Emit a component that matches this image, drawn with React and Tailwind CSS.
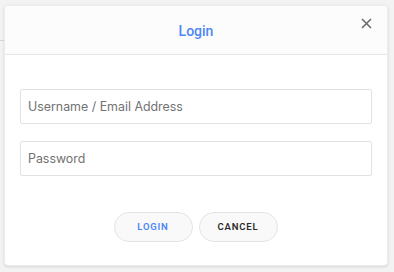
export default function App() {
  return (
    <div className="relative w-[394px] h-[272px] bg-[#f3f3f3] overflow-hidden" style={{ fontFamily: "Inter, 'Noto Sans', sans-serif" }}>
      <div className="absolute left-0 top-[40px] w-[6px] h-px bg-[#d9d9d9]" />
      <div className="absolute left-[4px] top-[5px] w-[384px] h-[261px] bg-white rounded-[4px] shadow-[0_1px_3px_rgba(0,0,0,0.12)] border border-[#ececec] flex flex-col">
        <div className="relative h-[49px] bg-[#fcfcfc] border-b border-[#e6e6e6] flex items-center justify-center rounded-t-[4px]">
          <span className="text-[14px] font-medium text-[#4d87f6] mt-[2px]" style={{ fontFamily: "Roboto, sans-serif" }}>Login</span>
          <svg className="absolute right-[15px] top-[12px]" width="11" height="11" viewBox="0 0 11 11">
            <path d="M1 1L10 10M10 1L1 10" stroke="#6b6b6b" strokeWidth="1.6" />
          </svg>
        </div>
        <div className="flex flex-col px-[15px] pt-[34px] gap-[17px]">
          <div className="h-[35px] border border-[#e2e2e2] rounded-[2px] flex items-center px-[7px] pt-[2px] text-[12.4px] text-[#727272]">Username / Email Address</div>
          <div className="h-[35px] border border-[#e2e2e2] rounded-[2px] flex items-center px-[7px] pt-[2px] text-[12.4px] text-[#727272]">Password</div>
        </div>
        <div className="flex justify-center gap-[6px] mt-[36px] pr-[1px]" style={{ fontFamily: "Roboto, sans-serif" }}>
          <div className="w-[79px] h-[30px] rounded-full bg-[#f9f9f9] border border-[#e4e4e4] flex items-center justify-center text-[9.5px] font-semibold tracking-[0.8px] text-[#4d87f6]">LOGIN</div>
          <div className="w-[79px] h-[30px] rounded-full bg-[#f9f9f9] border border-[#e4e4e4] flex items-center justify-center text-[9.5px] font-semibold tracking-[0.8px] text-[#2b2b2b]">CANCEL</div>
        </div>
      </div>
    </div>
  );
}
